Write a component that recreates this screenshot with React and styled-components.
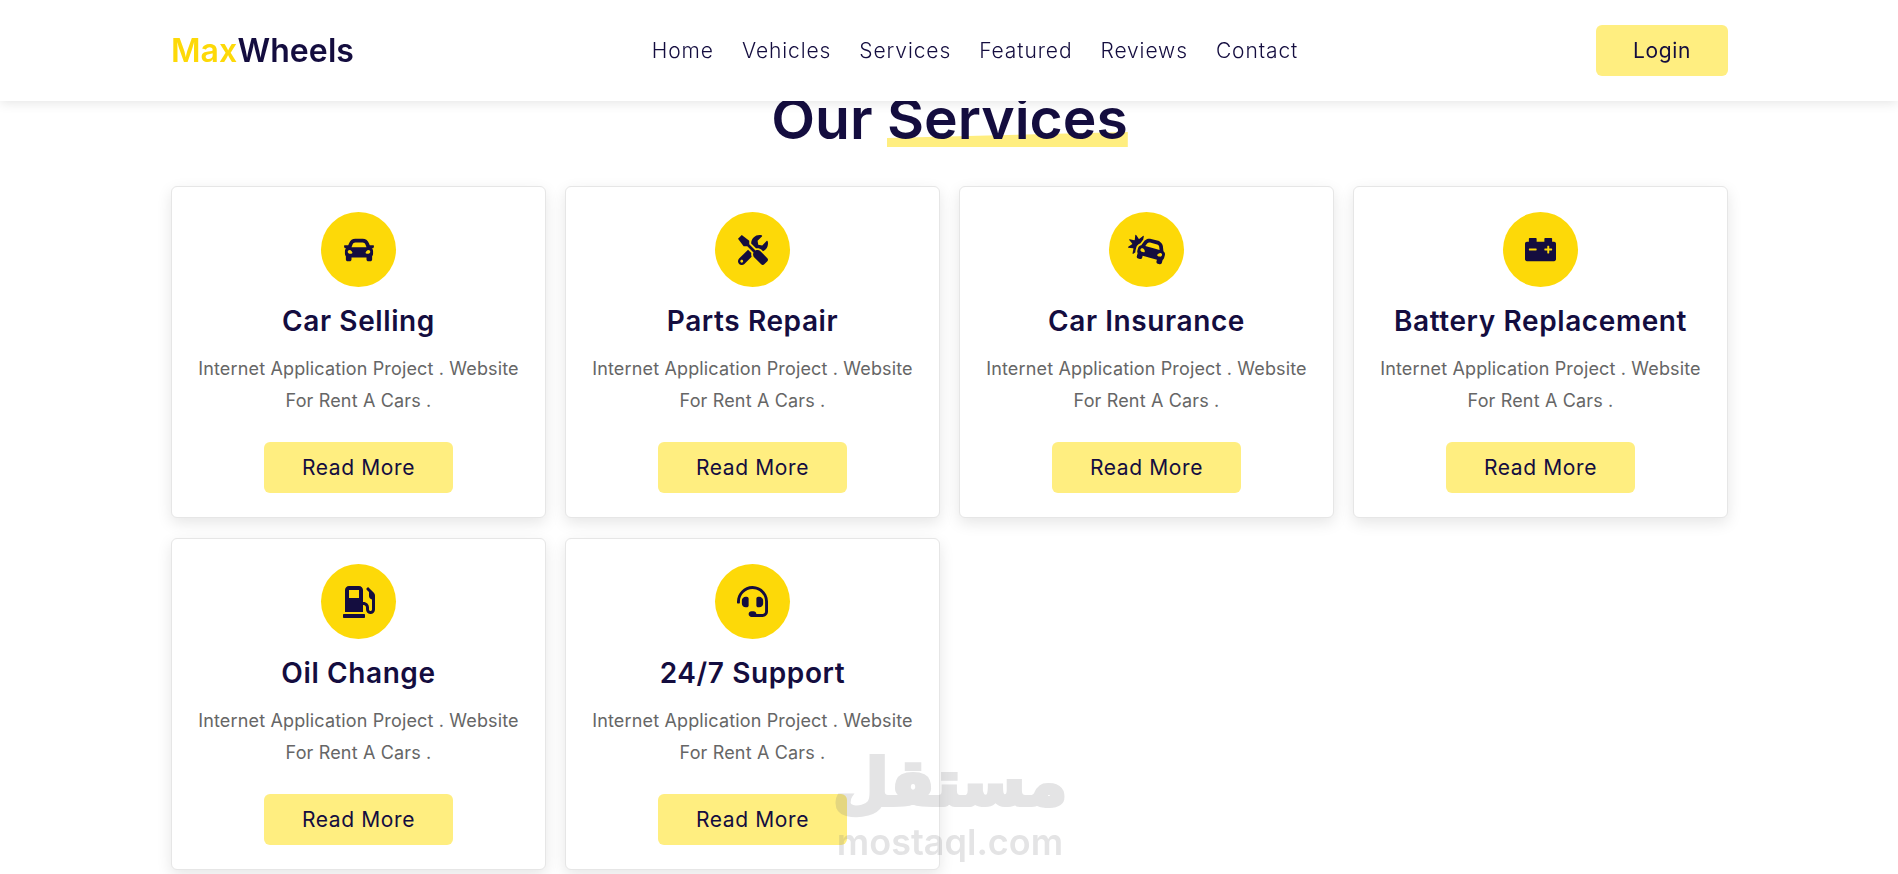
import React from "react";
import styled, { createGlobalStyle } from "styled-components";
import { FaCar, FaTools, FaCarCrash, FaCarBattery, FaGasPump, FaHeadset } from "react-icons/fa";

const services = [
  { title: "Car Selling", Icon: FaCar, size: 30 },
  { title: "Parts Repair", Icon: FaTools, size: 30 },
  { title: "Car Insurance", Icon: FaCarCrash, size: 37 },
  { title: "Battery Replacement", Icon: FaCarBattery, size: 31 },
  { title: "Oil Change", Icon: FaGasPump, size: 32 },
  { title: "24/7 Support", Icon: FaHeadset, size: 31 },
];

const links = ["Home", "Vehicles", "Services", "Featured", "Reviews", "Contact"];

const App = () => {
  return (
    <>
      <GlobalStyle />
      <Header>
        <Logo>
          <span>Max</span>Wheels
        </Logo>
        <Nav>
          {links.map((link) => (
            <NavLink key={link} href="#">
              {link}
            </NavLink>
          ))}
        </Nav>
        <YellowButton>Login</YellowButton>
      </Header>
      <Main>
        <Heading>
          Our <Highlight>Services</Highlight>
        </Heading>
        <Grid>
          {services.map(({ title, Icon, size }) => (
            <Card key={title}>
              <IconCircle>
                <Icon size={size} />
              </IconCircle>
              <CardTitle>{title}</CardTitle>
              <CardText>Internet Application Project . Website For Rent A Cars .</CardText>
              <ReadMore>Read More</ReadMore>
            </Card>
          ))}
        </Grid>
      </Main>
      <Watermark>
        <strong>مستقل</strong>
        <small>mostaql.com</small>
      </Watermark>
    </>
  );
};

export default App;

const GlobalStyle = createGlobalStyle`
  html, body {
    margin: 0;
    height: 100%;
    overflow: hidden;
    background: #fff;
    font-family: "Inter", "Liberation Sans", sans-serif;
    color: #140d3f;
  }
  * {
    box-sizing: border-box;
  }
`;

const Header = styled.header`
  position: fixed;
  top: 0;
  left: 0;
  right: 0;
  z-index: 10;
  height: 101px;
  padding: 0 170px 0 171px;
  display: flex;
  align-items: center;
  justify-content: space-between;
  background: #fff;
  box-shadow: 0 1px 12px rgba(0, 0, 0, 0.12);
`;

const Logo = styled.div`
  font-size: 32px;
  font-weight: 600;
  letter-spacing: 0.1px;
  span {
    color: #fdd908;
  }
`;

const Nav = styled.nav`
  display: flex;
  gap: 28px;
`;

const NavLink = styled.a`
  color: #140d3f;
  font-size: 21px;
  font-weight: 300;
  letter-spacing: 0.9px;
  text-decoration: none;
`;

const YellowButton = styled.button`
  width: 132px;
  height: 51px;
  border: 0;
  border-radius: 6px;
  background: #ffee80;
  color: #140d3f;
  font-family: inherit;
  font-size: 21px;
  font-weight: 400;
  letter-spacing: 0.6px;
`;

const Main = styled.main`
  padding: 84px 170px 0 171px;
`;

const Heading = styled.h1`
  margin: 0 0 33px;
  height: 69px;
  line-height: 69px;
  text-align: center;
  font-size: 57px;
  font-weight: 600;
  color: #140d3f;
`;

const Highlight = styled.span`
  position: relative;
  display: inline-block;
  z-index: 0;
  &::after {
    content: "";
    position: absolute;
    z-index: -1;
    left: 0;
    right: 0;
    bottom: 6px;
    height: 15px;
    background: #ffee80;
    clip-path: polygon(0 40%, 100% 0, 100% 100%, 0 100%);
  }
`;

const Grid = styled.div`
  display: grid;
  grid-template-columns: repeat(4, 1fr);
  gap: 20px 19px;
`;

const Card = styled.article`
  height: 332px;
  padding: 25px 20px 0;
  display: flex;
  flex-direction: column;
  align-items: center;
  background: #fff;
  border: 1px solid #e6e6e6;
  border-radius: 6px;
  box-shadow: 0 5px 15px rgba(0, 0, 0, 0.1);
`;

const IconCircle = styled.div`
  width: 75px;
  height: 75px;
  flex: none;
  display: flex;
  align-items: center;
  justify-content: center;
  border-radius: 50%;
  background: #fdd908;
  color: #140d3f;
`;

const CardTitle = styled.h3`
  margin: 13px 0 0;
  height: 42px;
  line-height: 42px;
  font-size: 28px;
  font-weight: 600;
  letter-spacing: 0.6px;
  color: #140d3f;
`;

const CardText = styled.p`
  margin: 11px 0 0;
  font-size: 18px;
  line-height: 32px;
  font-weight: 400;
  letter-spacing: 0.15px;
  text-align: center;
  color: #666;
`;

const ReadMore = styled(YellowButton)`
  margin-top: 25px;
  width: 189px;
  flex: none;
`;

const Watermark = styled.div`
  position: fixed;
  left: 832px;
  top: 742px;
  z-index: 20;
  width: 236px;
  display: flex;
  flex-direction: column;
  align-items: center;
  color: #78787d;
  opacity: 0.2;
  pointer-events: none;
  strong {
    font-family: "DejaVu Sans", sans-serif;
    font-size: 64px;
    line-height: 82px;
    font-weight: 700;
    -webkit-text-stroke: 4px #78787d;
  }
  small {
    font-family: "Inter", sans-serif;
    font-size: 36px;
    line-height: 36px;
    font-weight: 600;
  }
`;
